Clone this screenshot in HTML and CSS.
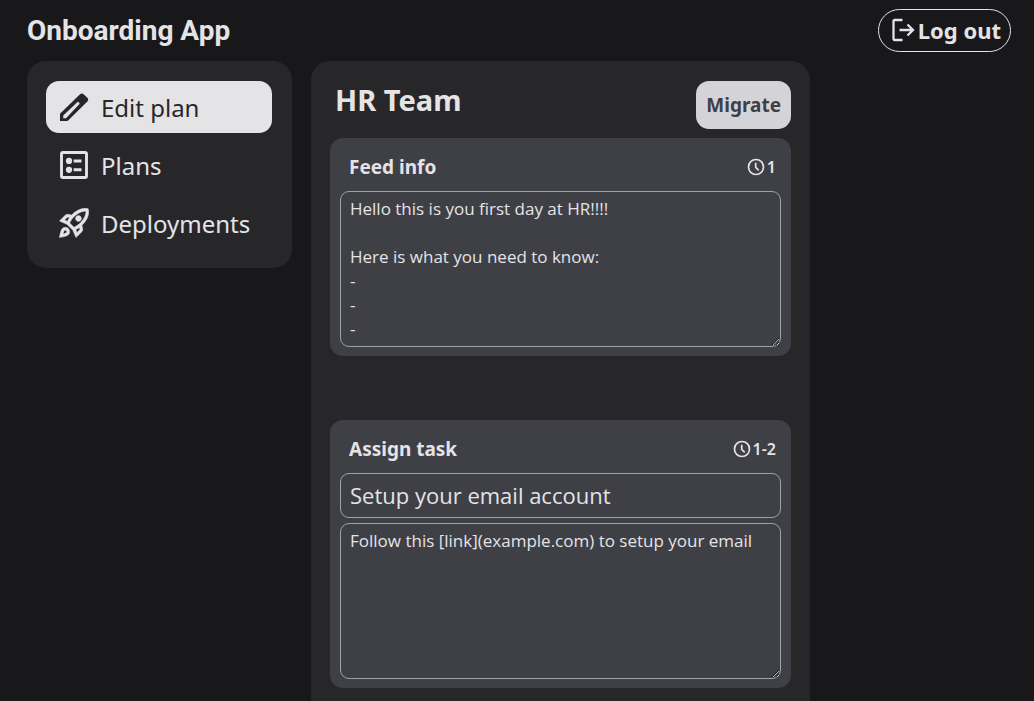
FILE: index.html
```html
<!DOCTYPE html>
<html lang="en">
<head>
<meta charset="utf-8">
<meta name="viewport" content="width=device-width, initial-scale=1">
<title>Onboarding App</title>
<link rel="stylesheet" href="styles.css">
</head>
<body>
<header class="topbar">
  <h1 class="brand">Onboarding App</h1>
  <button class="logout" type="button">
    <svg class="icon-logout" viewBox="0 0 24 24" aria-hidden="true"><path fill="none" stroke="currentColor" stroke-width="2.300" d="M11.500 2H3.500a1 1 0 0 0-1 1v18a1 1 0 0 0 1 1H11.500M8.500 12H21.500M16.500 6.500l5.500 5.500-5.500 5.500"/></svg>
    Log out
  </button>
</header>
<div class="layout">
  <nav class="sidebar">
    <a class="nav-item active" href="#edit" aria-current="page">
      <svg class="nav-icon" viewBox="0 0 24 24" aria-hidden="true"><path fill="currentColor" fill-rule="evenodd" d="M.8 23.200V17.300L16.600 1.900a2.400 2.400 0 0 1 3.300 0l2.600 2.500a2.400 2.400 0 0 1 0 3.400L6.900 23.200zM3.400 20.900h2.200L16.200 9.700a.8.8 0 0 0 0-1.100l-.5-.5a.8.8 0 0 0-1.100 0L3.400 18.700z"/></svg>
      Edit plan
    </a>
    <a class="nav-item" href="#plans">
      <svg class="nav-icon" viewBox="0 0 24 24" aria-hidden="true"><rect x="2" y="2" width="20" height="20" rx="1.200" fill="none" stroke="currentColor" stroke-width="2.300"/><circle cx="8" cy="8.700" r="2.500" fill="currentColor"/><circle cx="8" cy="15.800" r="2.500" fill="currentColor"/><path stroke="currentColor" stroke-width="2.400" d="M11.700 8.700H18M11.700 15.800H18"/></svg>
      Plans
    </a>
    <a class="nav-item" href="#deployments">
      <svg class="nav-icon" viewBox="1.700 1.800 20.500 20.500" aria-hidden="true"><path fill="currentColor" stroke="currentColor" stroke-width=".3" d="M6 15c-.83 0-1.580.34-2.120.88C2.700 17.060 2 22 2 22s4.940-.7 6.120-1.880C8.660 19.580 9 18.830 9 18a3 3 0 0 0-3-3m.71 3.710c-.28.28-2.170.76-2.170.76s.47-1.880.76-2.170c.17-.19.42-.3.7-.3a1 1 0 0 1 .71 1.710m10.710-5.060c6.360-6.360 4.240-11.310 4.240-11.310S16.710.22 10.350 6.580l-2.490-.5a2.030 2.030 0 0 0-1.810.55L2 10.690l5 2.140L11.170 17l2.140 5 4.050-4.050c.47-.47.68-1.150.55-1.810zM7.410 10.830l-1.910-.82 1.970-1.970 1.440.29c-.57.83-1.080 1.700-1.500 2.500m6.580 7.670-.82-1.910c.8-.42 1.670-.93 2.490-1.500l.29 1.440zM16 12.240c-1.320 1.320-3.380 2.400-4.040 2.730l-2.930-2.930c.32-.65 1.400-2.710 2.730-4.040 4.680-4.680 8.230-3.990 8.230-3.990S20.680 7.560 16 12.240M15 11c1.100 0 2-.9 2-2s-.9-2-2-2-2 .9-2 2 .9 2 2 2"/></svg>
      Deployments
    </a>
  </nav>
  <main class="plan">
    <div class="plan-head">
      <h2 class="plan-title">HR Team</h2>
      <button class="migrate" type="button">Migrate</button>
    </div>
    <section class="card">
      <div class="card-head">
        <h3 class="card-title" id="feed">Feed info</h3>
        <span class="days"><svg class="clock" viewBox="0 0 18 18" aria-hidden="true"><path fill="none" stroke="currentColor" stroke-width="1.700" d="M9 1.500a7.500 7.500 0 1 0 0 15 7.500 7.500 0 0 0 0-15M8.700 4.800v4.500l3 3"/></svg>1</span>
      </div>
      <textarea class="field notes" rows="6" aria-labelledby="feed">Hello this is you first day at HR!!!!

Here is what you need to know:
-
-
-</textarea>
    </section>
    <section class="card">
      <div class="card-head">
        <h3 class="card-title" id="task">Assign task</h3>
        <span class="days"><svg class="clock" viewBox="0 0 18 18" aria-hidden="true"><path fill="none" stroke="currentColor" stroke-width="1.700" d="M9 1.500a7.500 7.500 0 1 0 0 15 7.500 7.500 0 0 0 0-15M8.700 4.800v4.500l3 3"/></svg>1-2</span>
      </div>
      <input class="field subject" type="text" aria-label="Task title" value="Setup your email account">
      <textarea class="field notes" rows="6" aria-labelledby="task">Follow this [link](example.com) to setup your email</textarea>
    </section>
  </main>
</div>
</body>
</html>
```
FILE: styles.css
```css
* { box-sizing: border-box; }
html { overflow: hidden; }
body {
  margin: 0;
  padding: 9px 23px 0 27px;
  background: #18181b;
  color: #e4e4e7;
  font-family: "Noto Sans", sans-serif;
}
h1, h2, h3 { margin: 0; }
button, input, textarea { font: inherit; color: inherit; margin: 0; }
.topbar {
  display: flex;
  justify-content: space-between;
  align-items: center;
  margin-bottom: 9px;
}
.brand {
  font: bold 28px/43px Roboto, sans-serif;
}
.logout {
  display: flex;
  align-items: center;
  gap: 3px;
  height: 43px;
  padding: 0 9px 1px 12px;
  border: 1px solid #e4e4e7;
  border-radius: 22px;
  background: none;
  font-size: 22px;
  font-weight: 700;
}
.icon-logout { width: 24px; height: 24px; }
.layout {
  display: grid;
  grid-template-columns: 265px minmax(0, 499px);
  gap: 19px;
  align-items: start;
}
.sidebar {
  display: flex;
  flex-direction: column;
  gap: 6px;
  padding: 20px 20px 19px 19px;
  border-radius: 19px;
  background: #27272a;
}
.nav-item {
  display: flex;
  align-items: center;
  gap: 12px;
  height: 52px;
  padding: 0 13px;
  border-radius: 13px;
  color: inherit;
  font-size: 24px;
  text-decoration: none;
}
.nav-item.active { background: #e4e4e7; color: #27272a; }
.nav-icon { width: 30px; height: 30px; flex: none; }
.plan {
  padding: 20px 19px 64px;
  border-radius: 19px;
  background: #27272a;
}
.plan-head {
  display: flex;
  justify-content: space-between;
  margin-bottom: 9px;
  padding-left: 5px;
}
.plan-title { font-size: 29px; line-height: 38px; }
.migrate {
  height: 48px;
  padding: 0 10px;
  border: 0;
  border-radius: 13px;
  background: #d4d4d8;
  color: #3f3f46;
  font-size: 19px;
  font-weight: 700;
}
.card {
  display: flex;
  flex-direction: column;
  gap: 5px;
  padding: 9px 10px;
  border-radius: 13px;
  background: #3f3f46;
}
.card + .card { margin-top: 64px; }
.card-head {
  display: flex;
  justify-content: space-between;
  align-items: center;
  height: 39px;
  padding: 0 5px 0 9px;
}
.card-title { font-size: 19px; }
.days {
  display: flex;
  align-items: center;
  gap: 2px;
  font-size: 16px;
  font-weight: 600;
}
.clock { width: 18px; height: 18px; }
.field {
  display: block;
  width: 100%;
  padding: 5px 9px;
  border: 1px solid #a1a1aa;
  border-radius: 9px;
  background: transparent;
  font-family: "Open Sans", sans-serif;
}
.subject { height: 45px; padding-bottom: 7px; font-size: 22px; }
.notes {
  overflow: hidden;
  font-size: 17px;
  line-height: 24px;
  resize: vertical;
}
```
